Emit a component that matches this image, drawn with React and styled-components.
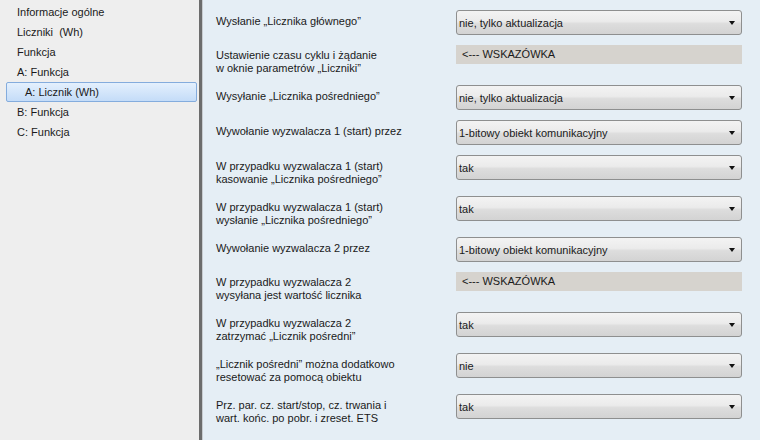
import React from "react"
import styled, { createGlobalStyle } from "styled-components"

const GlobalStyle = createGlobalStyle`
    html, body {
        margin: 0;
        padding: 0;
        width: 760px;
        height: 440px;
        overflow: hidden;
    }
    body {
        font-family: "Liberation Sans", Arial, sans-serif;
        font-size: 11px;
        color: #1a1a1a;
    }
`

const Window = styled.div`
    display: flex;
    width: 760px;
    height: 440px;
`

const Sidebar = styled.div`
    width: 199px;
    background: #eeeeee;
    padding-top: 2px;
    box-sizing: border-box;
`

const TreeItem = styled.div`
    height: 20px;
    line-height: 20px;
    padding-left: ${(p) => (p.$indent ? 25 : 17)}px;
    margin: 0 2px 0 0;
    box-sizing: border-box;
    white-space: pre;
    ${(p) =>
        p.$selected &&
        `
        margin: 0 2px 0 6px;
        padding-left: 18px;
        border: 1px solid #84acdd;
        border-radius: 2px;
        line-height: 18px;
        background: linear-gradient(#e4f0fd, #c4dcf8);
    `}
`

const Divider = styled.div`
    width: 3px;
    background: #6c6c6c;
    border-right: 1px solid #c8ccd0;
`

const Content = styled.div`
    flex: 1;
    background: #e5eef5;
    padding: 10px 0 0 13px;
    display: flex;
    flex-direction: column;
    gap: 10px;
`

const Row = styled.div`
    display: grid;
    grid-template-columns: 240px 286px;
    align-items: start;
`

const Label = styled.div`
    line-height: 13px;
    margin-top: ${(p) => (p.$hint ? 4 : 5)}px;
    white-space: pre-line;
`

const Select = styled.div`
    height: 25px;
    box-sizing: border-box;
    border: 1px solid #8e8f8f;
    border-radius: 3px;
    background: linear-gradient(#f3f3f3 0%, #ebebeb 45%, #dddddd 55%, #d3d3d3 100%);
    display: flex;
    align-items: center;
    justify-content: space-between;
    padding: 0 6px 0 2px;
`

const Arrow = styled.span`
    width: 0;
    height: 0;
    border-left: 3.5px solid transparent;
    border-right: 3.5px solid transparent;
    border-top: 4px solid #111;
`

const Hint = styled.div`
    height: 19px;
    line-height: 19px;
    background: #d6d3ce;
    padding-left: 6px;
`

const tree = [
    { label: "Informacje ogólne" },
    { label: "Liczniki  (Wh)" },
    { label: "Funkcja" },
    { label: "A: Funkcja" },
    { label: "A: Licznik (Wh)", indent: true, selected: true },
    { label: "B: Funkcja" },
    { label: "C: Funkcja" },
]

const params = [
    { label: "Wysłanie „Licznika głównego”", value: "nie, tylko aktualizacja" },
    { label: "Ustawienie czasu cyklu i żądanie\nw oknie parametrów „Liczniki”", hint: "<--- WSKAZÓWKA" },
    { label: "Wysyłanie „Licznika pośredniego”", value: "nie, tylko aktualizacja" },
    { label: "Wywołanie wyzwalacza 1 (start) przez", value: "1-bitowy obiekt komunikacyjny" },
    { label: "W przypadku wyzwalacza 1 (start)\nkasowanie „Licznika pośredniego”", value: "tak" },
    { label: "W przypadku wyzwalacza 1 (start)\nwysłanie „Licznika pośredniego”", value: "tak" },
    { label: "Wywołanie wyzwalacza 2 przez", value: "1-bitowy obiekt komunikacyjny" },
    { label: "W przypadku wyzwalacza 2\nwysyłana jest wartość licznika", hint: "<--- WSKAZÓWKA" },
    { label: "W przypadku wyzwalacza 2\nzatrzymać „Licznik pośredni”", value: "tak" },
    { label: "„Licznik pośredni” można dodatkowo\nresetować za pomocą obiektu", value: "nie" },
    { label: "Prz. par. cz. start/stop, cz. trwania i\nwart. końc. po pobr. i zreset. ETS", value: "tak" },
]

const App = () => {
    return (
        <>
            <GlobalStyle />
            <Window>
                <Sidebar>
                    {tree.map((item) => (
                        <TreeItem key={item.label} $indent={item.indent} $selected={item.selected}>
                            {item.label}
                        </TreeItem>
                    ))}
                </Sidebar>
                <Divider />
                <Content>
                    {params.map((p) => (
                        <Row key={p.label}>
                            <Label $hint={!!p.hint}>{p.label}</Label>
                            {p.hint ? (
                                <Hint>{p.hint}</Hint>
                            ) : (
                                <Select>
                                    <span>{p.value}</span>
                                    <Arrow />
                                </Select>
                            )}
                        </Row>
                    ))}
                </Content>
            </Window>
        </>
    )
}

export default App
